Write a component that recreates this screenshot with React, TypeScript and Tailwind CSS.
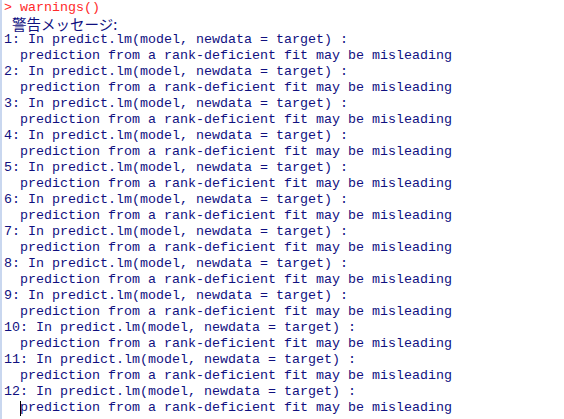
const warnings = Array.from({ length: 12 }, (_, i) => i + 1);

function App() {
  return (
    <div className="relative h-[419px] w-[564px] overflow-hidden bg-white">
      {/* left gutter strip */}
      <div className="absolute left-0 top-0 h-full w-[2px] bg-[#c9d7ef]" />
      <div className="pl-[4px] font-['Liberation_Mono','Courier_New',monospace] text-[13.33px] leading-[16px] text-[#10107f] whitespace-pre">
        <div className="text-[#ff2a2a]">{"> warnings()"}</div>
        <div className="h-[16px] pl-[8px] font-['Noto_Sans_CJK_JP',sans-serif] text-[14.5px] leading-[16px]">
          警告メッセージ:
        </div>
        {warnings.map((n) => (
          <div key={n}>
            <div>{`${n}: In predict.lm(model, newdata = target) :`}</div>
            <div className="relative">
              {n === 12 && (
                <span className="absolute left-[16px] top-[1px] h-[15px] w-px bg-black" />
              )}
              {"  prediction from a rank-deficient fit may be misleading"}
            </div>
          </div>
        ))}
      </div>
    </div>
  );
}

export default App;
